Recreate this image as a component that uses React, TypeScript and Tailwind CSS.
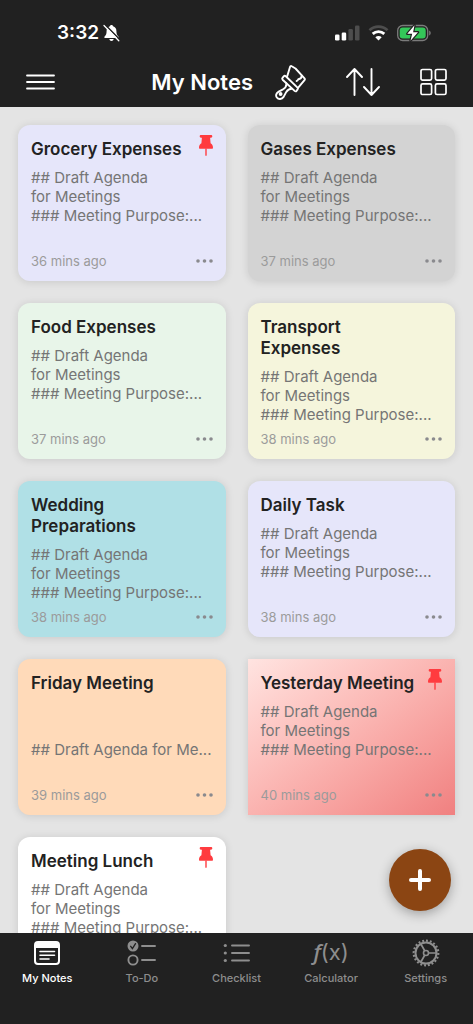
import type { ReactNode } from "react"

type Note = {
  title: string
  body: string
  age: string
  tone: string
  pinned?: boolean
}

const draft = "## Draft Agenda\nfor Meetings\n### Meeting Purpose:..."

const notes: Note[] = [
  { title: "Grocery Expenses", body: draft, age: "36 mins ago", tone: "rounded-xl bg-[#e6e6fa]", pinned: true },
  { title: "Gases Expenses", body: draft, age: "37 mins ago", tone: "rounded-xl bg-[#d3d3d3]" },
  { title: "Food Expenses", body: draft, age: "37 mins ago", tone: "rounded-xl bg-[#e8f5e9]" },
  { title: "Transport\nExpenses", body: draft, age: "38 mins ago", tone: "rounded-xl bg-[#f5f5dc]" },
  { title: "Wedding\nPreparations", body: draft, age: "38 mins ago", tone: "rounded-xl bg-[#b0e0e6]" },
  { title: "Daily Task", body: draft, age: "38 mins ago", tone: "rounded-xl bg-[#e6e6fa]" },
  { title: "Friday Meeting", body: "\n\n## Draft Agenda for Me...", age: "39 mins ago", tone: "rounded-xl bg-[#ffdab9]" },
  {
    title: "Yesterday Meeting",
    body: draft,
    age: "40 mins ago",
    tone: "bg-linear-to-br from-[#ffe4e1] to-[#f08080]",
    pinned: true,
  },
  { title: "Meeting Lunch", body: draft, age: "40 mins ago", tone: "rounded-xl bg-white", pinned: true },
]

function BellOffIcon() {
  return (
    <svg width="17" height="18" viewBox="0 0 17 18" aria-hidden="true">
      <path
        d="M8.500 1c.9 0 1.500.6 1.600 1.300 2.100.7 3.300 2.400 3.300 4.700 0 3.200.7 4.200 2 5.400.5.600.3 1.600-.7 1.600H2.300c-1 0-1.200-1-.7-1.600 1.300-1.200 2-2.200 2-5.400 0-2.300 1.200-4 3.300-4.700C7 1.600 7.600 1 8.500 1zM6.300 15h4.400c-.2 1.200-1.100 2-2.200 2s-2-.8-2.200-2z"
        fill="#fff"
      />
      <path d="M2.200 0.800 17 15.800" stroke="#212121" strokeWidth="1.600" />
      <path d="M1 1.500 15.800 16.800" stroke="#fff" strokeWidth="1.300" strokeLinecap="round" />
    </svg>
  )
}

function SignalIcon() {
  return (
    <svg width="25" height="16" viewBox="0 0 25 16" aria-hidden="true">
      <rect x="0" y="9.500" width="4.500" height="6" rx="1.300" fill="#fff" />
      <rect x="6.700" y="7.500" width="4.500" height="8" rx="1.300" fill="#fff" />
      <rect x="13.400" y="4" width="4.500" height="11.500" rx="1.300" fill="#4d4d4d" />
      <rect x="20" y="0.500" width="4.500" height="15" rx="1.300" fill="#4d4d4d" />
    </svg>
  )
}

function WifiIcon() {
  return (
    <svg width="21" height="16" viewBox="0 0 21 16" fill="none" aria-hidden="true">
      <path d="M1.500 5.200c5.200-4.900 12.800-4.900 18 0" stroke="#4d4d4d" strokeWidth="2.800" />
      <path d="M4.700 8.900c3.400-3.100 8.200-3.100 11.600 0" stroke="#fff" strokeWidth="2.800" />
      <path d="M10.500 15.500 7.300 12.300c1.900-1.700 4.500-1.700 6.400 0z" fill="#fff" />
    </svg>
  )
}

function BatteryIcon() {
  return (
    <svg width="35" height="18" viewBox="0 0 35 18" aria-hidden="true">
      <rect x="0.700" y="1.500" width="30" height="15" rx="5" fill="none" stroke="#7b7b7b" strokeWidth="1.300" />
      <rect x="2.700" y="3.500" width="26" height="11" rx="3" fill="#34c759" />
      <path d="M32.200 6.500c2 .7 2 4.300 0 5z" fill="#7b7b7b" />
      <path
        d="M17.500 1.300 10.300 9.800h4.900l-1.700 7L21 8.200h-4.900z"
        fill="#fff"
        stroke="#212121"
        strokeWidth="2.400"
        strokeLinejoin="round"
        paintOrder="stroke"
      />
    </svg>
  )
}

function MenuIcon() {
  return (
    <svg width="29" height="16" viewBox="0 0 29 16" stroke="#fff" strokeWidth="1.800" strokeLinecap="round" aria-hidden="true">
      <path d="M1 1.500h27M1 8h27M1 14.500h27" />
    </svg>
  )
}

function BrushIcon() {
  return (
    <svg
      width="31"
      height="36"
      viewBox="0 0 31 36"
      fill="none"
      stroke="#fff"
      strokeWidth="1.900"
      strokeLinecap="round"
      strokeLinejoin="round"
      aria-hidden="true"
    >
      {/* bristles */}
      <path d="M12.300 12 15 3c.3-.9 1-1.200 1.800-.7L20.500 4.500l9 9.800c.5.600.5 1.200 0 1.800l-6.300 7.600" />
      <path d="M26.800 11.700c-.2 2.200-1.400 3.500-3.500 3.600-.3 1-.8 1.500-1.700 1.700" />
      {/* ferrule */}
      <path d="M10.800 12.300 22.500 23.600c.6.600.6 1.200.1 1.800l-1 1.400c-.6.700-1.300.7-2 .1L7.600 15.700c-.6-.6-.6-1.200-.1-1.800l1.200-1.500c.6-.7 1.400-.7 2.100-.1z" />
      {/* handle */}
      <path d="M11.300 19.300c.4 2.600-.7 4.500-3.300 6l-4.300 2.300c-2.500 1.500-3.300 4-1.900 5.900 1.600 2.200 5 2.100 6.800-.6l2.700-5c1.200-2 2.900-3.200 5.400-3.200" />
      <circle cx="5.600" cy="30" r="1" />
    </svg>
  )
}

function SortIcon() {
  return (
    <svg
      width="34"
      height="28"
      viewBox="0 0 34 28"
      fill="none"
      stroke="#fff"
      strokeWidth="1.900"
      strokeLinecap="round"
      strokeLinejoin="round"
      aria-hidden="true"
    >
      <path d="M8.500 27V1M1 9l7.500-8L16 9M25.500 1v26M18 19l7.500 8 7.500-8" />
    </svg>
  )
}

function GridIcon() {
  return (
    <svg width="27" height="28" viewBox="0 0 27 28" fill="none" stroke="#fff" strokeWidth="1.700" aria-hidden="true">
      <rect x="1" y="1.500" width="10.600" height="10.600" rx="1.600" />
      <rect x="15.400" y="1.500" width="10.600" height="10.600" rx="1.600" />
      <rect x="1" y="15.900" width="10.600" height="10.600" rx="1.600" />
      <rect x="15.400" y="15.900" width="10.600" height="10.600" rx="1.600" />
    </svg>
  )
}

function PinIcon() {
  return (
    <svg width="14" height="21" viewBox="0 0 14 21" fill="#ff3b3f" aria-hidden="true">
      <path d="M2 0h10c1 0 1.300.6 1.300 1.300S12.900 2.700 12 2.700h-.9l.5 5.500c1.500.9 2.400 2.500 2.400 4.600 0 .7-.4 1-1 1H1c-.6 0-1-.3-1-1 0-2.100.9-3.700 2.400-4.600l.5-5.500H2C1.100 2.700.7 2 .7 1.300S1 0 2 0z" />
      <path d="M6.300 13.500h1.400V20c0 1.200-1.400 1.200-1.400 0z" />
    </svg>
  )
}

function DotsIcon() {
  return (
    <svg width="17" height="4" viewBox="0 0 17 4" fill="#8a8a8e" aria-hidden="true">
      <circle cx="2" cy="2" r="1.800" />
      <circle cx="8.500" cy="2" r="1.800" />
      <circle cx="15" cy="2" r="1.800" />
    </svg>
  )
}

function NotesIcon() {
  return (
    <svg width="26" height="24" viewBox="0 0 26 24" fill="none" stroke="currentColor" aria-hidden="true">
      <rect x="1" y="1" width="24" height="22" rx="3" strokeWidth="2" />
      <path d="M1 2h24v5H1z" fill="currentColor" stroke="none" />
      <path d="M6 10.500h14.500M6 14.200h14.500M6 18h9" strokeWidth="1.600" strokeLinecap="round" />
    </svg>
  )
}

function TodoIcon() {
  return (
    <svg width="29" height="26" viewBox="0 0 29 26" fill="none" stroke="currentColor" strokeWidth="1.900" strokeLinecap="round" aria-hidden="true">
      <circle cx="6" cy="6" r="5.500" fill="currentColor" stroke="none" />
      <path d="m3.700 6.300 1.700 2.200L8.500 3.600" stroke="#212121" strokeWidth="1.300" />
      <circle cx="6" cy="20" r="4.600" />
      <path d="M15 6h13M15 20h13" />
    </svg>
  )
}

function ChecklistIcon() {
  return (
    <svg width="27" height="20" viewBox="0 0 27 20" fill="currentColor" stroke="currentColor" aria-hidden="true">
      <path d="M9 2.500h17M9 10h17M9 17.500h17" strokeWidth="1.900" strokeLinecap="round" />
      <g stroke="none">
        <circle cx="2.300" cy="2.500" r="1.600" />
        <circle cx="2.300" cy="10" r="1.600" />
        <circle cx="2.300" cy="17.500" r="1.600" />
      </g>
    </svg>
  )
}

function FunctionLabel() {
  return (
    <span className="pb-0.5 text-[22px] leading-6" aria-hidden="true">
      <i className="font-['Noto_Sans',sans-serif] leading-none font-medium">f</i>(x)
    </span>
  )
}

function GearIcon() {
  return (
    <svg width="28" height="28" viewBox="0 0 28 28" fill="none" stroke="currentColor" aria-hidden="true">
      <circle cx="14" cy="14" r="12.300" strokeWidth="2.200" pathLength="40" strokeDasharray="1 1" />
      <circle cx="14" cy="14" r="10.500" strokeWidth="2" />
      <circle cx="14" cy="14" r="2.500" strokeWidth="1.600" />
      <path d="M16.600 14h8M12.700 11.700l-4-6.900M12.700 16.300l-4 6.900" strokeWidth="1.700" />
    </svg>
  )
}

const tabs: { label: string; icon: ReactNode; active?: boolean }[] = [
  { label: "My Notes", icon: <NotesIcon />, active: true },
  { label: "To-Do", icon: <TodoIcon /> },
  { label: "Checklist", icon: <ChecklistIcon /> },
  { label: "Calculator", icon: <FunctionLabel /> },
  { label: "Settings", icon: <GearIcon /> },
]

function NoteCard({ note }: { note: Note }) {
  return (
    <article
      className={`flex min-h-[156px] flex-col px-[13px] pt-3.5 pb-3 shadow-[0_1px_8px_rgba(0,0,0,0.12)] ${note.tone}`}
    >
      <div className="flex items-start justify-between">
        <h2 className="text-[17px] leading-[21px] font-semibold whitespace-pre text-[#222]">{note.title}</h2>
        {note.pinned && (
          <span className="-mt-1 -mb-2 w-3.5 shrink-0">
            <PinIcon />
          </span>
        )}
      </div>
      <p className="mt-2 text-[15px] leading-[19px] whitespace-pre text-[#757575]">{note.body}</p>
      <div className="mt-auto flex items-center justify-between">
        <span className="text-[13px] leading-4 text-[#9b9b9b]">{note.age}</span>
        <button type="button" aria-label="More options">
          <DotsIcon />
        </button>
      </div>
    </article>
  )
}

export default function App() {
  return (
    <div className="flex h-screen flex-col bg-[#e4e4e4] font-[Inter,sans-serif]">
      <header className="bg-[#212121] text-white">
        {/* Status bar */}
        <div className="flex h-[57px] items-center justify-between pt-2 pr-[41px] pl-[57px]">
          <div className="flex items-center gap-1">
            <span className="text-[19px] leading-6 font-semibold">3:32</span>
            <BellOffIcon />
          </div>
          <div className="flex items-center gap-2">
            <SignalIcon />
            <WifiIcon />
            <BatteryIcon />
          </div>
        </div>

        {/* Toolbar */}
        <div className="flex h-[50px] items-center justify-between px-[26px]">
          <button type="button" aria-label="Menu">
            <MenuIcon />
          </button>
          <div className="flex items-center gap-10">
            <div className="flex items-center gap-[22px]">
              <h1 className="text-[22px] leading-7 font-semibold">My Notes</h1>
              <button type="button" aria-label="Theme">
                <BrushIcon />
              </button>
            </div>
            <button type="button" aria-label="Sort">
              <SortIcon />
            </button>
            <button type="button" aria-label="Change layout">
              <GridIcon />
            </button>
          </div>
        </div>
      </header>

      <div className="relative min-h-0 flex-1">
        <main className="grid h-full auto-rows-max grid-cols-2 gap-[22px] overflow-y-auto p-[18px] [scrollbar-width:none]">
          {notes.map((n) => (
            <NoteCard key={n.title} note={n} />
          ))}
        </main>
        <button
          type="button"
          aria-label="Add note"
          className="absolute right-[22px] bottom-[22px] flex size-[62px] items-center justify-center rounded-full bg-[#8b4513] shadow-[0_3px_12px_rgba(0,0,0,0.3)]"
        >
          <svg width="22" height="22" viewBox="0 0 22 22" stroke="#fff" strokeWidth="4" strokeLinecap="round" aria-hidden="true">
            <path d="M11 2v18M2 11h18" />
          </svg>
        </button>
      </div>

      <nav className="grid h-[91px] grid-cols-5 items-start bg-[#212121] pt-1.5">
        {tabs.map((t) => (
          <a
            key={t.label}
            href="#"
            className={`flex flex-col items-center gap-[3px] ${t.active ? "text-white" : "text-[#8e8e8e]"}`}
          >
            <span className="flex h-7 items-center">{t.icon}</span>
            <span className="text-[11px] leading-4 font-medium">{t.label}</span>
          </a>
        ))}
      </nav>
    </div>
  )
}
